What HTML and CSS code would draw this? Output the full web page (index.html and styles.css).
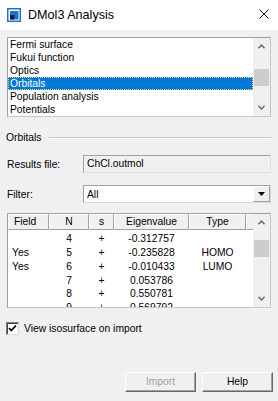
FILE: index.html
```html
<!DOCTYPE html>
<html>
<head>
<meta charset="utf-8">
<link rel="stylesheet" href="styles.css">
</head>
<body>
<div class="window">
  <div class="titlebar">
    <svg class="app-icon" width="14" height="14" viewBox="0 0 14 14">
      <rect x="0" y="0" width="14" height="14" fill="#1c74c9"/>
      <rect x="1.5" y="1.5" width="11" height="11" fill="#ffffff"/>
      <rect x="3" y="3" width="8.5" height="8.5" fill="#1c74c9"/>
      <rect x="3" y="7" width="4.5" height="4.5" fill="#10243c"/>
    </svg>
    <span class="title">DMol3 Analysis</span>
    <svg class="close" width="10" height="10" viewBox="0 0 10 10">
      <path d="M0.5 0.5L9.5 9.5M9.5 0.5L0.5 9.5" stroke="#111" stroke-width="1" fill="none"/>
    </svg>
  </div>
  <div class="content">
    <div class="listbox">
      <ul class="items">
        <li>Fermi surface</li>
        <li>Fukui function</li>
        <li>Optics</li>
        <li class="selected">Orbitals</li>
        <li>Population analysis</li>
        <li>Potentials</li>
      </ul>
      <div class="vscroll">
        <div class="sbtn"><svg width="7" height="5" viewBox="0 0 7 5"><polyline points="0.5,4.2 3.5,1 6.5,4.2" fill="none" stroke="#606060" stroke-width="1.3"/></svg></div>
        <div class="track track-list"><div class="thumb"></div></div>
        <div class="sbtn"><svg width="7" height="5" viewBox="0 0 7 5"><polyline points="0.5,0.8 3.5,4 6.5,0.8" fill="none" stroke="#606060" stroke-width="1.3"/></svg></div>
      </div>
    </div>

    <div class="group-label"><span>Orbitals</span><div class="rule"></div></div>

    <div class="field-row results">
      <span class="field-label">Results file:</span>
      <div class="readonly">ChCl.outmol</div>
    </div>
    <div class="field-row filter">
      <span class="field-label">Filter:</span>
      <div class="combo">
        <span class="combo-value">All</span>
        <div class="drop"><svg width="7" height="4" viewBox="0 0 7 4"><polygon points="0,0 7,0 3.5,4" fill="#000"/></svg></div>
      </div>
    </div>

    <div class="table">
      <div class="table-main">
        <div class="thead">
          <div class="th left">Field</div>
          <div class="th">N</div>
          <div class="th">s</div>
          <div class="th">Eigenvalue</div>
          <div class="th">Type</div>
          <div class="th"></div>
        </div>
        <div class="tbody">
          <div class="tr"><div class="td left"></div><div class="td">4</div><div class="td">+</div><div class="td">-0.312757</div><div class="td"></div></div>
          <div class="tr"><div class="td left">Yes</div><div class="td">5</div><div class="td">+</div><div class="td">-0.235828</div><div class="td">HOMO</div></div>
          <div class="tr"><div class="td left">Yes</div><div class="td">6</div><div class="td">+</div><div class="td">-0.010433</div><div class="td">LUMO</div></div>
          <div class="tr"><div class="td left"></div><div class="td">7</div><div class="td">+</div><div class="td">0.053786</div><div class="td"></div></div>
          <div class="tr"><div class="td left"></div><div class="td">8</div><div class="td">+</div><div class="td">0.550781</div><div class="td"></div></div>
          <div class="tr"><div class="td left"></div><div class="td">9</div><div class="td">+</div><div class="td">0.569792</div><div class="td"></div></div>
        </div>
      </div>
      <div class="vscroll">
        <div class="sbtn"><svg width="7" height="5" viewBox="0 0 7 5"><polyline points="0.5,4.2 3.5,1 6.5,4.2" fill="none" stroke="#606060" stroke-width="1.3"/></svg></div>
        <div class="track track-table"><div class="thumb"></div></div>
        <div class="sbtn"><svg width="7" height="5" viewBox="0 0 7 5"><polyline points="0.5,0.8 3.5,4 6.5,0.8" fill="none" stroke="#606060" stroke-width="1.3"/></svg></div>
      </div>
    </div>

    <div class="check">
      <span class="box"><svg width="11" height="11" viewBox="0 0 11 11"><polyline points="2,5 4.3,7.5 9,2.5" fill="none" stroke="#000" stroke-width="1.8"/></svg></span>
      <span>View isosurface on import</span>
    </div>

    <div class="buttons">
      <div class="btn disabled">Import</div>
      <div class="btn">Help</div>
    </div>
  </div>
</div>
</body>
</html>
```

FILE: styles.css
```css
* { box-sizing: border-box; }
html, body {
  margin: 0;
  padding: 0;
  width: 278px;
  height: 401px;
  overflow: hidden;
  background: #f0f0f0;
}
body {
  font-family: "Liberation Sans", Arial, sans-serif;
  font-size: 10.3px;
  color: #000;
}
.window {
  width: 278px;
  height: 401px;
  background: #f0f0f0;
}
.titlebar {
  height: 30px;
  background: #ffffff;
  display: flex;
  align-items: center;
  padding-left: 7px;
  padding-right: 9px;
}
.app-icon { display: block; flex: none; }
.title {
  margin-left: 7px;
  font-size: 12.6px;
  flex: 1;
  padding-bottom: 1px;
}
.close { display: block; flex: none; margin-top: -2px; }

.content {
  padding: 7px 7px 0 7px;
  display: flex;
  flex-direction: column;
}

/* listbox */
.listbox {
  height: 80px;
  border: 1px solid #a0a0a0;
  border-right-color: #c8c8c8;
  border-bottom-color: #c8c8c8;
  background: #fff;
  display: flex;
}
.items {
  list-style: none;
  margin: 0;
  padding: 0;
  flex: 1;
}
.items li {
  height: 13px;
  line-height: 13px;
  padding-left: 2px;
  white-space: nowrap;
}
.items li.selected {
  background: #0078d7;
  color: #fff;
  outline: 1px dotted #f3d37c;
  outline-offset: -1px;
}
.vscroll {
  width: 17px;
  flex: none;
  background: #f0f0f0;
  display: flex;
  flex-direction: column;
}
.sbtn {
  height: 17px;
  flex: none;
  display: flex;
  align-items: center;
  justify-content: center;
}
.sbtn svg { display: block; }
.track { flex: 1; padding-left: 1px; padding-right: 1px; }
.track-list { padding-top: 14px; }
.track-table { padding-top: 9px; }
.thumb { height: 17px; background: #cdcdcd; }

/* group label */
.group-label {
  margin-top: 14px;
  height: 13px;
  display: flex;
  align-items: center;
  line-height: 13px;
}
.group-label span { margin-left: -1px; }
.rule {
  flex: 1;
  margin-left: 8px;
  border-top: 1px solid #c8c8c8;
  border-bottom: 1px solid #ffffff;
  margin-top: 1px;
}

/* field rows */
.field-row {
  display: flex;
  align-items: center;
  height: 18px;
}
.results { margin-top: 11px; }
.filter { margin-top: 12px; }
.field-label { width: 76px; flex: none; }
.readonly {
  flex: 1;
  height: 18px;
  line-height: 16px;
  padding-left: 3px;
  background: #f0f0f0;
  border: 1px solid #a0a0a0;
  border-right-color: #e0e0e0;
  border-bottom-color: #e0e0e0;
}
.combo {
  flex: 1;
  height: 18px;
  background: #fff;
  border: 1px solid #a0a0a0;
  border-right-color: #d8d8d8;
  border-bottom-color: #d8d8d8;
  display: flex;
  align-items: center;
}
.combo-value { flex: 1; padding-left: 3px; }
.drop {
  width: 17px;
  height: 16px;
  flex: none;
  background: #f0f0f0;
  border-top: 1px solid #fff;
  border-left: 1px solid #fff;
  border-right: 1px solid #a0a0a0;
  border-bottom: 1px solid #a0a0a0;
  display: flex;
  align-items: center;
  justify-content: center;
}
.drop svg { display: block; }

/* table */
.table {
  margin-top: 10px;
  height: 95px;
  border: 1px solid #a0a0a0;
  border-right-color: #c8c8c8;
  border-bottom-color: #c8c8c8;
  background: #fff;
  display: flex;
  overflow: hidden;
}
.table-main { flex: 1; overflow: hidden; }
.thead, .tr {
  display: grid;
  grid-template-columns: 41px 40px 25px 75px 57px 8px;
}
.thead { height: 16px; }
.th {
  background: #f0f0f0;
  border-top: 1px solid #fff;
  border-left: 1px solid #fff;
  border-right: 1px solid #a0a0a0;
  border-bottom: 1px solid #a0a0a0;
  box-shadow: 1px 0 0 #696969;
  text-align: center;
  line-height: 14px;
  white-space: nowrap;
  overflow: hidden;
}
.th.left { text-align: left; padding-left: 5px; }
.tbody { padding-top: 2.4px; }
.tr {
  grid-template-columns: 41px 40px 25px 75px 57px;
  height: 13.75px;
  line-height: 13.75px;
}
.td { text-align: center; white-space: nowrap; }
.td.left { text-align: left; padding-left: 4px; }

/* checkbox */
.check {
  margin-top: 14px;
  height: 13px;
  display: flex;
  align-items: center;
  margin-left: -1px;
}
.box {
  width: 13px;
  height: 13px;
  flex: none;
  background: #fff;
  border: 1px solid #808080;
  border-right-color: #dcdcdc;
  border-bottom-color: #dcdcdc;
  box-shadow: inset 1px 1px 0 #404040;
  display: flex;
  align-items: center;
  justify-content: center;
  margin-right: 5px;
}
.box svg { display: block; }

/* buttons */
.buttons {
  margin-top: 37px;
  display: flex;
  justify-content: flex-end;
  gap: 6px;
  margin-right: -2px;
}
.btn {
  width: 71px;
  height: 20px;
  background: #f0f0f0;
  border-top: 1px solid #fff;
  border-left: 1px solid #fff;
  border-right: 1px solid #696969;
  border-bottom: 1px solid #696969;
  box-shadow: inset -1px -1px 0 #a0a0a0;
  text-align: center;
  line-height: 18px;
}
.btn.disabled { color: #a0a0a0; }
```
